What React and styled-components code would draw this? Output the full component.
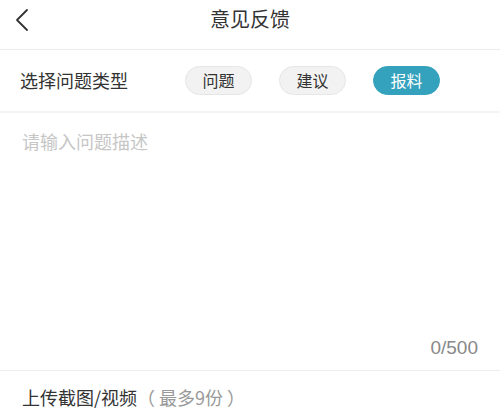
import styled, { createGlobalStyle } from 'styled-components';

const GlobalStyle = createGlobalStyle`
    html, body {
        margin: 0;
        padding: 0;
        background: #fff;
    }
    body {
        font-family: "Noto Sans CJK SC", "Liberation Sans", sans-serif;
        color: #333;
    }
`

const Page = styled.div`
    width: 500px;
    height: 416px;
    overflow: hidden;
    display: flex;
    flex-direction: column;
`
const Header = styled.div`
    height: 49px;
    flex-shrink: 0;
    display: flex;
    align-items: center;
    justify-content: center;
    border-bottom: 1px solid #ececec;
    position: relative;
`
const Back = styled.button`
    position: absolute;
    left: 10px;
    top: 6px;
    border: none;
    background: none;
    padding: 0;
    width: 24px;
    height: 28px;
    display: flex;
    align-items: center;
    justify-content: center;
`
const Title = styled.h1`
    margin: 0;
    font-size: 20px;
    font-weight: 400;
    color: #333;
    margin-top: -12px;
`
const TypeRow = styled.div`
    height: 61px;
    flex-shrink: 0;
    display: flex;
    align-items: center;
    padding-left: 20px;
    border-bottom: 2px solid #f4f4f4;
`
const Label = styled.div`
    font-size: 18px;
    color: #333;
    width: 165px;
    margin-top: -1px;
`
const Pills = styled.div`
    display: flex;
    gap: 27px;
    margin-top: -1px;
`
const Pill = styled.button`
    width: 67px;
    height: 29px;
    border-radius: 15px;
    font-family: inherit;
    font-size: 16px;
    padding: 0;
    line-height: 27px;
    border: 1px solid ${p => (p.$active ? '#35a2bd' : '#e6e6e6')};
    background: ${p => (p.$active ? '#35a2bd' : '#f2f2f2')};
    color: ${p => (p.$active ? '#fff' : '#333')};
`
const Editor = styled.div`
    height: 257px;
    flex-shrink: 0;
    display: flex;
    flex-direction: column;
    border-bottom: 1px solid #ececec;
`
const TextArea = styled.textarea`
    flex: 1;
    border: none;
    outline: none;
    resize: none;
    padding: 15px 22px;
    font-family: inherit;
    font-size: 18px;
    color: #333;
    &::placeholder {
        color: #c6c6c6;
    }
`
const Counter = styled.div`
    text-align: right;
    padding: 0 22px 11px 0;
    font-family: "Liberation Sans", sans-serif;
    font-size: 19px;
    color: #888;
`
const Upload = styled.div`
    padding: 13px 22px;
    font-size: 18px;
    color: #333;
`
const Hint = styled.span`
    color: #999;
`

const App = () => {
    return (
        <Page>
            <GlobalStyle />
            <Header>
                <Back>
                    <svg width="16" height="24" viewBox="0 0 16 24">
                        <path d="M13 2 L3 12 L13 22" fill="none" stroke="#333" strokeWidth="1.8" strokeLinecap="round" strokeLinejoin="round" />
                    </svg>
                </Back>
                <Title>意见反馈</Title>
            </Header>
            <TypeRow>
                <Label>选择问题类型</Label>
                <Pills>
                    <Pill>问题</Pill>
                    <Pill>建议</Pill>
                    <Pill $active>报料</Pill>
                </Pills>
            </TypeRow>
            <Editor>
                <TextArea placeholder="请输入问题描述" />
                <Counter>0/500</Counter>
            </Editor>
            <Upload>
                上传截图/视频<Hint>（ 最多9份 ）</Hint>
            </Upload>
        </Page>
    );
}

export default App;
